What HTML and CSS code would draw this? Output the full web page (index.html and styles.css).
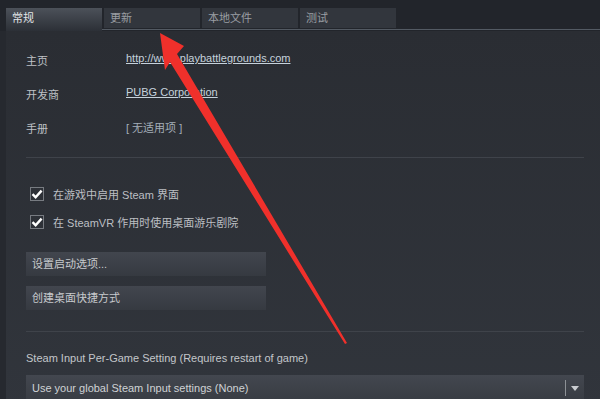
FILE: index.html
```html
<!DOCTYPE html>
<html lang="zh-CN">
<head>
    <meta charset="UTF-8">
    <title>属性</title>
    <link rel="stylesheet" href="styles.css">
</head>
<body>

    <div class="tabs">
        <div class="tab active">常规</div>
        <div class="tab_rest">
            <div class="tab">更新</div>
            <div class="tab">本地文件</div>
            <div class="tab">测试</div>
        </div>
    </div>

    <div class="panel">
        <div class="info">
            <span class="label">主页</span>
            <span class="value"><a href="#">http://www.playbattlegrounds.com</a></span>
            <span class="label">开发商</span>
            <span class="value"><a href="#">PUBG Corporation</a></span>
            <span class="label">手册</span>
            <span class="value none">[ 无适用项 ]</span>
        </div>

        <div class="sep"></div>

        <div class="checks">
            <label class="check"><span class="box"><svg width="12" height="10" viewBox="0 0 12 10"><path d="M1.5 5.2 L4.6 8.2 L10.6 1.6" fill="none" stroke="#fff" stroke-width="2.4"/></svg></span>在游戏中启用 Steam 界面</label>
            <label class="check"><span class="box"><svg width="12" height="10" viewBox="0 0 12 10"><path d="M1.5 5.2 L4.6 8.2 L10.6 1.6" fill="none" stroke="#fff" stroke-width="2.4"/></svg></span>在 SteamVR 作用时使用桌面游乐剧院</label>
        </div>

        <div class="buttons">
            <div class="btn">设置启动选项...</div>
            <div class="btn">创建桌面快捷方式</div>
        </div>

        <div class="sep second"></div>

        <div class="input_title">Steam Input Per-Game Setting (Requires restart of game)</div>
        <div class="select">
            <span class="select_text">Use your global Steam Input settings (None)</span>
            <span class="select_arrow"></span>
        </div>
    </div>

    <svg class="mark" width="600" height="399" viewBox="0 0 600 399">
        <polygon points="160,33 184,46 177,54 347,343 345,344 170,62 165,70" fill="#f0302b"/>
    </svg>

</body>
</html>
```

FILE: styles.css
```css
body {
    margin: 0;
    width: 600px;
    height: 399px;
    overflow: hidden;
    position: relative;
    background-color: #22252b;
    font-family: "Liberation Sans", "Noto Sans CJK SC", sans-serif;
    font-size: 11px;
    color: #bfc2c6;
}

.tabs {
    display: flex;
    align-items: flex-start;
    padding: 8px 0 0 6px;
}

.tab {
    width: 96px;
    height: 20px;
    line-height: 20px;
    padding-left: 6px;
    box-sizing: border-box;
    background-color: #32363d;
    color: #9a9ea3;
}

.tab.active {
    height: 23px;
    line-height: 21px;
    background: linear-gradient(#4c5159, #2c3037);
    color: #e2e5e8;
}

.tab_rest {
    flex: 1;
    display: flex;
    align-items: flex-start;
    gap: 2px;
    height: 21px;
    padding-left: 2px;
    border-bottom: 1px solid #535a63;
}

.panel {
    height: 368px;
    border-left: 6px solid #26292f;
    padding: 12px 16px 0 20px;
    background: linear-gradient(#2a2d33, #31353c);
}

.info {
    display: grid;
    grid-template-columns: 100px 1fr;
    grid-auto-rows: 34px;
    align-items: center;
}

.value {
    padding-bottom: 4px;
}

.value a {
    color: #c6d2dc;
    text-decoration: underline;
}

.value.none {
    color: #a4aeb8;
    padding-bottom: 2px;
}

.sep {
    height: 1px;
    margin-top: 12px;
    background-color: #3f434a;
}

.checks {
    margin-top: 22px;
}

.check {
    display: flex;
    align-items: center;
    gap: 9px;
    height: 28px;
    padding-left: 4px;
    color: #bcbfc3;
}

.box {
    width: 14px;
    height: 14px;
    box-sizing: border-box;
    border: 1px solid #777b81;
    display: flex;
    align-items: center;
    justify-content: center;
}

.buttons {
    margin-top: 16px;
    display: flex;
    flex-direction: column;
    gap: 10px;
}

.btn {
    width: 240px;
    height: 24px;
    line-height: 24px;
    padding-left: 6px;
    box-sizing: border-box;
    background: linear-gradient(#42464e, #363a41);
    color: #c7cacd;
}

.sep.second {
    margin-top: 21px;
}

.input_title {
    margin-top: 18px;
    line-height: 16px;
    color: #c3c6ca;
}

.select {
    margin-top: 9px;
    height: 26px;
    display: flex;
    align-items: center;
    padding-left: 6px;
    background: linear-gradient(#43474f, #383c43);
    color: #cfd2d5;
}

.select_text {
    flex: 1;
}

.select_arrow {
    width: 18px;
    height: 16px;
    border-left: 1px solid #8d9196;
    display: flex;
    align-items: center;
    justify-content: center;
}

.select_arrow::after {
    content: "";
    border-left: 4px solid transparent;
    border-right: 4px solid transparent;
    border-top: 5px solid #c9ccd0;
}

.mark {
    position: absolute;
    left: 0;
    top: 0;
}
```
